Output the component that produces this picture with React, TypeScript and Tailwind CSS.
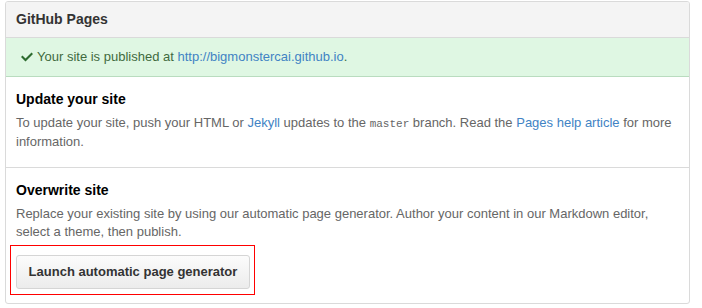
export default function App() {
  return (
    <div className="w-[702px] h-[308px] bg-white pt-[1px] pl-[5px] pr-[12px] font-['Liberation_Sans',Arial,sans-serif] text-[13px]">
      <div className="border border-[#dadada] rounded-[3px] overflow-hidden">
        <div className="h-[36px] flex items-center px-[10px] bg-[#f4f4f4] border-b border-[#dadada]">
          <h2 className="text-[14px] font-bold text-[#333]">GitHub Pages</h2>
        </div>

        <div className="h-[39px] flex items-center px-[15px] bg-[#dff7e3] border-b border-[#b9dcbf] text-[#3f6a3e] text-[13px]">
          <svg width="12" height="12" viewBox="0 0 12 12" className="mr-[4px] fill-[#2c6b2f]">
            <path d="M12 3l-7.5 7.5L0 6l1.5-1.5 3 3 6-6z" />
          </svg>
          <span>
            Your site is published at{" "}
            <a href="#" className="text-[#4183c4]">http://bigmonstercai.github.io</a>.
          </span>
        </div>

        <div className="px-[10px] pt-[12px] pb-[16px] border-b border-[#dadada]">
          <h3 className="text-[14px] leading-[20px] font-bold text-black mb-[5px]">Update your site</h3>
          <p className="text-[13px] leading-[18px] text-[#666]">
            To update your site, push your HTML or <a href="#" className="text-[#4183c4]">Jekyll</a> updates to the{" "}
            <code className="font-['Liberation_Mono',monospace] text-[11px]">master</code> branch. Read the{" "}
            <a href="#" className="text-[#4183c4]">Pages help article</a> for more information.
          </p>
        </div>

        <div className="px-[10px] pt-[12px] pb-[8px]">
          <h3 className="text-[14px] leading-[20px] font-bold text-black mb-[5px]">Overwrite site</h3>
          <p className="text-[13px] leading-[18px] text-[#666]">
            Replace your existing site by using our automatic page generator. Author your content in our Markdown editor,
            select a theme, then publish.
          </p>
          <div className="mt-[4px] -ml-[6px] w-[245px] border border-[#ff0000] pl-[5px] pr-[4px] pt-[9px] pb-[5px]">
            <button className="h-[34px] w-[234px] rounded-[3px] border border-[#d5d5d5] bg-gradient-to-b from-[#fcfcfc] to-[#ececec] text-[13px] font-bold text-[#333]">
              Launch automatic page generator
            </button>
          </div>
        </div>
      </div>
    </div>
  );
}
